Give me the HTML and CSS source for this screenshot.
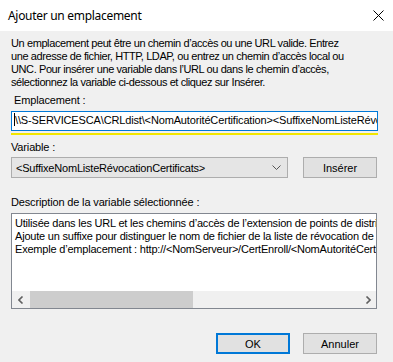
FILE: index.html
```html
<!DOCTYPE html>
<html lang="fr">
<head>
<meta charset="utf-8">
<title>Ajouter un emplacement</title>
<link rel="stylesheet" href="styles.css">
</head>
<body>
<div class="dialog">
  <div class="titlebar">
    <span class="title">Ajouter un emplacement</span>
    <svg class="close" width="11" height="11" viewBox="0 0 11 11"><path d="M0.5 0.5 L10.5 10.5 M10.5 0.5 L0.5 10.5" stroke="#000" stroke-width="1"/></svg>
  </div>
  <div class="content">
    <p class="intro">Un emplacement peut être un chemin d’accès ou une URL valide. Entrez<br>une adresse de fichier, HTTP, LDAP, ou entrez un chemin d’accès local ou<br>UNC. Pour insérer une variable dans l’URL ou dans le chemin d’accès,<br>sélectionnez la variable ci-dessous et cliquez sur Insérer.</p>
    <div class="label label-indent">Emplacement :</div>
    <div class="input"><span class="caret"></span>\\S-SERVICESCA\CRLdist\&lt;NomAutoritéCertification&gt;&lt;SuffixeNomListeRévocationCertificats&gt;.crl</div>
    <div class="underline"></div>
    <div class="label label-var">Variable :</div>
    <div class="row">
      <div class="select">
        <span class="select-text">&lt;SuffixeNomListeRévocationCertificats&gt;</span>
        <svg class="chevron" width="9" height="5" viewBox="0 0 9 5"><path d="M0.5 0.5 L4.5 4.5 L8.5 0.5" fill="none" stroke="#555" stroke-width="1"/></svg>
      </div>
      <div class="btn">Insérer</div>
    </div>
    <div class="label label-desc">Description de la variable sélectionnée :</div>
    <div class="desc">
      <div class="desc-text">Utilisée dans les URL et les chemins d’accès de l’extension de points de distribution de liste de révocation des certificats<br>Ajoute un suffixe pour distinguer le nom de fichier de la liste de révocation de certificats delta<br>Exemple d’emplacement : http://&lt;NomServeur&gt;/CertEnroll/&lt;NomAutoritéCertification&gt;&lt;SuffixeNomListeRévocationCertificats&gt;.crl</div>
      <div class="hscroll">
        <div class="sb-btn"><svg width="6" height="8" viewBox="0 0 6 8"><path d="M4.5 0.5 L1 4 L4.5 7.5" fill="none" stroke="#606060" stroke-width="1.6"/></svg></div>
        <div class="sb-track"><div class="sb-thumb"></div></div>
        <div class="sb-btn"><svg width="6" height="8" viewBox="0 0 6 8"><path d="M1.5 0.5 L5 4 L1.5 7.5" fill="none" stroke="#606060" stroke-width="1.6"/></svg></div>
      </div>
    </div>
    <div class="actions">
      <div class="btn btn-primary">OK</div>
      <div class="btn">Annuler</div>
    </div>
  </div>
</div>
</body>
</html>
```
FILE: styles.css
```css
html, body {
  margin: 0;
  padding: 0;
}
body {
  width: 393px;
  height: 362px;
  overflow: hidden;
  background: #f0f0f0;
  font-family: "Liberation Sans", Arial, sans-serif;
  font-size: 11px;
  color: #000;
}
.dialog {
  width: 393px;
  height: 362px;
  background: #f0f0f0;
  display: flex;
  flex-direction: column;
}
.titlebar {
  height: 31px;
  flex: none;
  background: #fff;
  display: flex;
  align-items: center;
  justify-content: space-between;
  padding: 0 9px 0 8px;
  box-sizing: border-box;
}
.title {
  font-family: "Noto Sans", "Open Sans", sans-serif;
  font-size: 12px;
  letter-spacing: -0.3px;
}
.close {
  display: block;
}
.content {
  padding: 6px 16px 0 11px;
}
.intro {
  margin: 0;
  line-height: 13px;
  white-space: nowrap;
  letter-spacing: -0.4px;
}
.label {
  line-height: 13px;
  white-space: nowrap;
  letter-spacing: -0.15px;
}
.label-indent {
  margin-top: 5px;
  padding-left: 3px;
}
.input {
  margin-top: 4px;
  height: 20px;
  box-sizing: border-box;
  border: 1px solid #0078d7;
  background: #fff;
  width: 367px;
  line-height: 17px;
  padding-left: 2px;
  white-space: nowrap;
  overflow: hidden;
  letter-spacing: -0.15px;
}
.caret {
  display: inline-block;
  width: 1px;
  height: 13px;
  background: #000;
  vertical-align: -2px;
}
.underline {
  margin-top: 2px;
  height: 2px;
  width: 367px;
  background: #f2e600;
}
.label-var {
  margin-top: 6px;
}
.row {
  margin-top: 3px;
  display: flex;
  gap: 15px;
  width: 366px;
}
.select {
  width: 277px;
  height: 21px;
  box-sizing: border-box;
  border: 1px solid #adadad;
  background: #e5e5e5;
  display: flex;
  align-items: center;
  justify-content: space-between;
  padding: 0 6px 0 4px;
}
.select-text {
  letter-spacing: -0.2px;
  white-space: nowrap;
}
.chevron {
  display: block;
}
.btn {
  width: 74px;
  height: 21px;
  box-sizing: border-box;
  border: 1px solid #adadad;
  background: #e1e1e1;
  display: flex;
  align-items: center;
  justify-content: center;
}
.label-desc {
  margin-top: 18px;
}
.desc {
  margin-top: 4px;
  width: 366px;
  height: 96px;
  box-sizing: border-box;
  border: 1px solid #828790;
  background: #fff;
  display: flex;
  flex-direction: column;
}
.desc-text {
  flex: 1;
  overflow: hidden;
  white-space: nowrap;
  line-height: 13px;
  padding: 3px 0 0 3px;
  letter-spacing: -0.2px;
}
.hscroll {
  height: 17px;
  flex: none;
  display: flex;
  background: #f0f0f0;
}
.sb-btn {
  width: 17px;
  display: flex;
  align-items: center;
  justify-content: center;
}
.sb-track {
  flex: 1;
  display: flex;
  align-items: stretch;
  padding: 0 0 0 1px;
}
.sb-thumb {
  width: 163px;
  background: #cdcdcd;
}
.actions {
  margin-top: 24px;
  display: flex;
  justify-content: flex-end;
  gap: 13px;
  width: 366px;
}
.btn-primary {
  border: 2px solid #0078d7;
}
```
